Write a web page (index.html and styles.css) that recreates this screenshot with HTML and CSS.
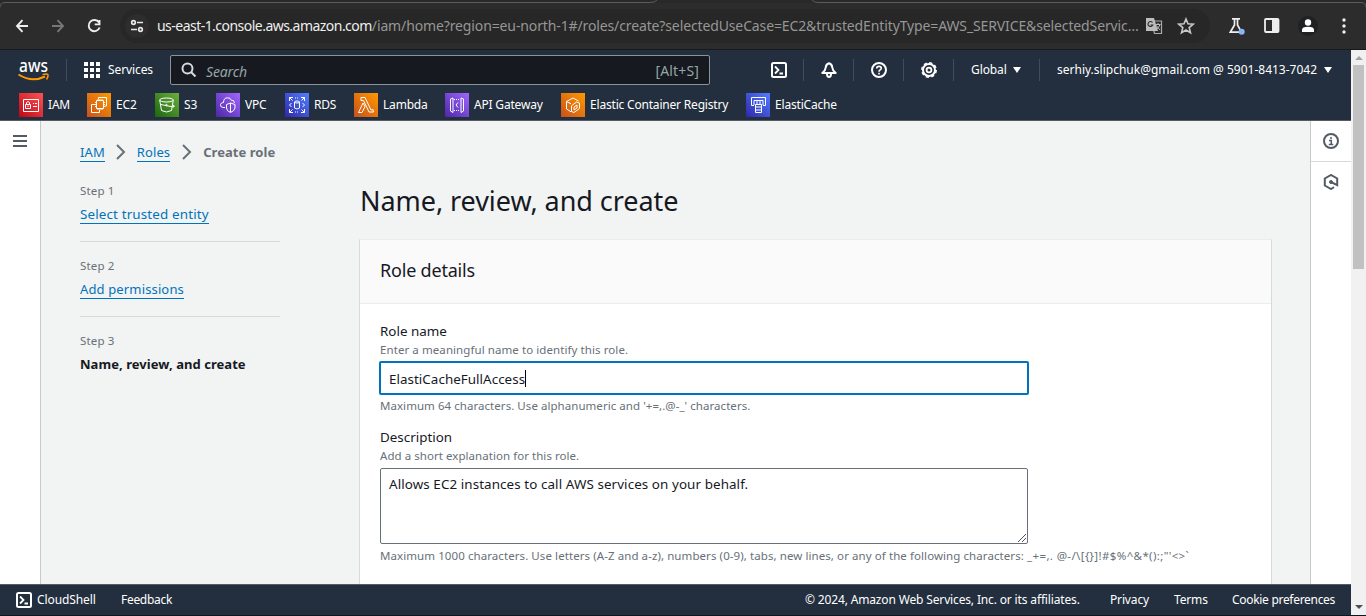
FILE: index.html
```html
<!DOCTYPE html>
<html lang="en">
<head>
<meta charset="utf-8">
<title>Create role | IAM</title>
<link rel="stylesheet" href="styles.css">
</head>
<body>
<div class="browser">
  <div class="toolbar">
    <svg class="toolbar-edge" width="1366" height="8" viewBox="0 0 1366 8"><rect width="1366" height="3" fill="#292929"/><path d="M0 7.500Q0 2.500 5 2.500H650Q655 2.500 657 0M812 0Q814 2.500 818 2.500H1361Q1366 2.500 1366 7.500" fill="none" stroke="#5c5c5c"/></svg>
    <svg class="nav-icons" width="90" height="20" viewBox="0 0 90 20" fill="none" stroke-width="1.900"><path d="M13 10H2M7.500 4.200L2 10L7.500 15.800" stroke="#eee"/><path d="M37 10H48M42.500 4.200L48 10L42.500 15.800" stroke="#777"/><path d="M84 6.500A5.600 5.600 0 1 0 84.600 11.500M84.500 4V8.400H79.700" stroke="#eee"/></svg>
    <div class="omnibox">
      <span class="site-info"><svg width="16" height="16" viewBox="0 0 16 16" fill="none" stroke="#e8e8e8" stroke-width="1.700"><circle cx="4.500" cy="4.500" r="1.800"/><path d="M8 4.500H14M2 11.500H8"/><circle cx="11.500" cy="11.500" r="1.800"/></svg></span>
      <span class="url"><b>us-east-1.console.aws.amazon.com</b>/iam/home?region=eu-north-1#/roles/create?selectedUseCase=EC2&amp;trustedEntityType=AWS_SERVICE&amp;selectedServic…</span>
      <svg class="translate" width="18" height="18" viewBox="0 0 18 18"><path d="M6 4H16.500V16.500H9.500L6 4Z" fill="#2a2a2a" stroke="#aaa" stroke-width="1.200"/><path d="M1 1H9L13 14H1Z" fill="#bdbdbd"/><path d="M7.500 5.500A2.500 2.500 0 1 0 7.800 8H5.500" fill="none" stroke="#333" stroke-width="1.200"/><path d="M10.500 7.500H15.500M13 6V7.500M15 7.500Q14 11 11 12.500M11.200 8.500L15 13" stroke="#bbb" fill="none"/></svg>
      <svg class="star" width="18" height="18" viewBox="0 0 18 18"><path d="M9 2L11 6.800L16.200 7.200L12.200 10.600L13.500 15.800L9 13L4.500 15.800L5.800 10.600L1.800 7.200L7 6.800Z" fill="none" stroke="#c7c7c7" stroke-width="1.600"/></svg>
    </div>
    <svg class="chrome-actions" width="126" height="24" viewBox="0 0 126 24"><path d="M4 4.800H12M6.500 5V11L2.300 18.200H13.500L9.500 11V5" fill="none" stroke="#eee" stroke-width="1.700"/><circle cx="13.700" cy="17.700" r="3" fill="#8ab4f8"/><rect x="37" y="5" width="13.500" height="13" rx="1" fill="none" stroke="#eee" stroke-width="1.800"/><path d="M44 5H51V18H44Z" fill="#eee"/><circle cx="80" cy="12" r="10" fill="#202122"/><circle cx="80" cy="8.500" r="3.200" fill="#fff"/><path d="M74 18V16Q74 12.800 80 12.800Q86 12.800 86 16V18Z" fill="#fff"/><g fill="#eee"><circle cx="116" cy="6" r="1.700"/><circle cx="116" cy="12" r="1.700"/><circle cx="116" cy="18" r="1.700"/></g></svg>
  </div>

  <div class="viewport">
    <div class="page">
      <header class="header">
        <div class="topbar">
          <svg class="aws" width="32" height="40" viewBox="0 -8 32 40"><text x="1" y="13" textLength="29" lengthAdjust="spacingAndGlyphs" class="aws-word">aws</text><path d="M.500 15.500Q14 24 27 17.500" fill="none" stroke="#f90" stroke-width="2"/><path d="M24.500 15.600Q29 14.300 30 15.600Q30.500 17.500 28.500 20.500" fill="none" stroke="#f90" stroke-width="1.500"/></svg>
          <i class="sep sep-logo"></i>
          <svg class="apps" width="16" height="16" viewBox="0 0 16 16" fill="#fff"><path d="M0 0H4V4H0ZM6 0H10V4H6ZM12 0H16V4H12ZM0 6H4V10H0ZM6 6H10V10H6ZM12 6H16V10H12ZM0 12H4V16H0ZM6 12H10V16H6ZM12 12H16V16H12Z"/></svg>
          <span class="services">Services</span>
          <div class="search"><svg width="16" height="16" viewBox="0 0 16 16" fill="none" stroke="#d5dbdb" stroke-width="2"><circle cx="6.500" cy="6.500" r="5"/><path d="M10 10L14.500 14.500"/></svg><em>Search</em><span class="hint">[Alt+S]</span></div>
          <div class="tools">
            <span><svg width="16" height="16" viewBox="0 0 16 16" fill="none" stroke="#fff" stroke-width="2"><rect x="1" y="1" width="14" height="14" rx="1.500"/><path d="M4 4.500L7.500 8L4 11.500M8.500 11.500H12" stroke-width="1.800"/></svg></span>
            <span><svg width="16" height="16" viewBox="0 0 16 16" fill="none" stroke="#fff" stroke-width="2" stroke-linejoin="round"><path d="M8 1.200Q5 2 4.700 5.500Q4.500 8.500 1.300 11H14.700Q11.500 8.500 11.300 5.500Q11 2 8 1.200Z"/><path d="M6 12Q6 15 8 15Q10 15 10 12"/></svg></span>
            <span><svg width="16" height="16" viewBox="0 0 16 16" fill="none" stroke="#fff" stroke-width="2"><circle cx="8" cy="8" r="7"/><path d="M5.700 6.500Q5.700 4.400 8 4.400Q10.300 4.400 10.300 6.300Q10.300 7.300 9 8Q8 8.500 8 9.700M8 10.800V12.500" stroke-width="1.600"/></svg></span>
            <span><svg width="16" height="16" viewBox="0 0 16 16" fill="none" stroke="#fff"><circle cx="8" cy="8" r="6" stroke-width="2"/><circle cx="8" cy="8" r="7.200" stroke-width="1.500" stroke-dasharray="3.200 2.455"/><circle cx="8" cy="8" r="2.400" stroke-width="1.800"/></svg></span>
          </div>
          <span class="region">Global</span><i class="caret"></i>
          <i class="sep sep-region"></i>
          <span class="account">serhiy.slipchuk@gmail.com @ 5901-8413-7042</span><i class="caret"></i>
        </div>
        <nav class="favorites">
          <a><svg class="g-red" viewBox="0 0 24 24"><path d="M4.500 6.500H19.500V18.500H4.500ZM6.500 11.500H11.500V15.500H6.500ZM7.500 11V9.500Q9 7.500 10.500 9.500V11M9 12.500V14M14 10.500H15M16 10.500H18M14 13.500H18"/></svg><span>IAM</span></a>
          <a><svg class="g-orange" viewBox="0 0 24 24"><path d="M9.500 7.500H16.500V15.500H9.500ZM11 6V7M13 6V7M15 6V7M11 16V17M13 16V17M15 16V17M8 9.500H9M8 11.500H9M8 13.500H9M17 9.500H18M17 11.500H18M17 13.500H18M11.500 6V4.500H19.500V13H18M8 11.500H4.500V19.500H12.500V17"/></svg><span>EC2</span></a>
          <a><svg class="g-green" viewBox="0 0 24 24"><ellipse cx="11.500" cy="7" rx="6.800" ry="2"/><path d="M4.700 7L6.500 17.500Q11.500 20.500 16.500 17.500L18.300 7M6 11.500Q12 13 19 14Q20 12.500 17.500 12"/><circle cx="11.500" cy="12" r=".7"/></svg><span>S3</span></a>
          <a><svg class="g-purple" viewBox="0 0 24 24"><path d="M9 14.500H7Q4 14 4.500 11.500Q5 9.500 7.500 9.500Q7.500 5 11.500 4.800Q14.500 4.500 15.500 7.500Q18 6.500 18.500 10M14.500 10L19 11.500V15Q18.500 18 14.500 19.500Q10.500 18 10.500 15V11.500ZM14.500 10V19"/></svg><span>VPC</span></a>
          <a><svg class="g-blue" viewBox="0 0 24 24"><path d="M4.500 8V4.500H8M4.500 4.500L7.500 7.500M16 4.500H19.500V8M19.500 4.500L16.500 7.500M4.500 16V19.500H8M4.500 19.500L7.500 16.500M19.500 16V19.500H16M19.500 19.500L16.500 16.500M6.500 10L4.500 12L6.500 14M17.500 10L19.500 12L17.500 14M9.500 9V15Q12 17 14.500 15V9"/><ellipse cx="12" cy="9" rx="2.500" ry="1"/><path d="M10 5H14M10 19H14" stroke-dasharray="1 1"/></svg><span>RDS</span></a>
          <a><svg class="g-orange" viewBox="0 0 24 24"><path d="M7 4.500H11L17 17L19 16.500L19.500 19H15L9.500 7.500H7ZM9 10L11 13.500L8 19.500H4.500Z"/></svg><span>Lambda</span></a>
          <a><svg class="g-purple" viewBox="0 0 24 24"><path d="M8 5L5.500 6V18L8 19.500ZM16 5L18.500 6V18L16 19.500ZM13 9.500L11 12L13 14.500"/><path d="M9 6.500H15M9 17.500H15" stroke-dasharray="1 1"/></svg><span>API Gateway</span></a>
          <a><svg class="g-orange" viewBox="0 0 24 24"><path d="M10 18.800L5.500 16V8.500L12 5L17.500 8M5.500 8.500L10 10.800M10.500 12.800L15.500 9L18.500 10V15.500L13 19.500L10.500 18.500ZM13 17V14L16 12V15Z"/></svg><span>Elastic Container Registry</span></a>
          <a><svg class="g-blue" viewBox="0 0 24 24"><path d="M8 12.500H5.500V4.500H19.500V12.500H17M8 12V7.500H17V12M11 7.500V11M14 7.500V11M9.500 11.500H15.500V19.500H9.500ZM9.500 14H15.500M9.500 17H15.500"/></svg><span>ElastiCache</span></a>
        </nav>
      </header>

      <div class="body">
        <aside class="left-rail"><svg width="14" height="12" viewBox="0 0 14 12" fill="#545b64"><path d="M0 0H14V2H0ZM0 5H14V7H0ZM0 10H14V12H0Z"/></svg></aside>
        <main class="main">
          <div class="side">
            <div class="crumbs"><a class="link">IAM</a><svg width="10" height="16" viewBox="0 0 10 16"><path d="M1 1L8 8L1 15"/></svg><a class="link">Roles</a><svg width="10" height="16" viewBox="0 0 10 16"><path d="M1 1L8 8L1 15"/></svg><b>Create role</b></div>
            <ol class="steps">
              <li><small>Step 1</small><a class="link link-trust">Select trusted entity</a></li>
              <li><small>Step 2</small><a class="link link-perms">Add permissions</a></li>
              <li><small>Step 3</small><b>Name, review, and create</b></li>
            </ol>
          </div>
          <div class="content">
            <h1>Name, review, and create</h1>
            <section class="card">
              <div class="card-head"><h2>Role details</h2></div>
              <div class="card-body">
                <div class="label label-name">Role name</div>
                <div class="note note-name">Enter a meaningful name to identify this role.</div>
                <div class="input"><span>ElastiCacheFullAccess</span></div>
                <div class="note note-limit">Maximum 64 characters. Use alphanumeric and '+=,.@-_' characters.</div>
                <div class="label label-desc">Description</div>
                <div class="note note-desc">Add a short explanation for this role.</div>
                <div class="textarea"><span>Allows EC2 instances to call AWS services on your behalf.</span><svg width="8" height="8" viewBox="0 0 8 8" stroke="#555"><path d="M0 8L8 0M4 8L8 4"/></svg></div>
                <div class="note note-chars">Maximum 1000 characters. Use letters (A-Z and a-z), numbers (0-9), tabs, new lines, or any of the following characters: <span class="symbols">_+=,. @-/\[{}]!#$%^&amp;*():;"'&lt;&gt;`</span></div>
              </div>
            </section>
          </div>
        </main>
        <aside class="right-rail">
          <span><svg width="16" height="16" viewBox="0 0 16 16" fill="none" stroke="#545b64" stroke-width="2"><circle cx="8" cy="8" r="7"/><path d="M8 4V6M6 7.500H8.300V11M5.800 11.500H10.300" stroke-width="1.500"/></svg></span>
          <span><svg width="16" height="16" viewBox="0 0 16 16" fill="none" stroke="#545b64" stroke-width="2"><path d="M11 13.200L8 15L1.800 11.500V4.500L8 1L14.200 4.500V11.200L8 8"/><circle cx="8" cy="8" r="1.500" fill="#545b64" stroke-width="1"/></svg></span>
        </aside>
      </div>

      <footer class="footer">
        <svg width="16" height="16" viewBox="0 0 16 16" fill="none" stroke="#fff" stroke-width="2"><rect x="1" y="1" width="14" height="14" rx="1.500"/><path d="M4 4.500L7.500 8L4 11.500M8.500 11.500H12" stroke-width="1.800"/></svg>
        <span class="f-shell">CloudShell</span><span class="f-feedback">Feedback</span>
        <span class="f-copy">© 2024, Amazon Web Services, Inc. or its affiliates.</span><span class="f-privacy">Privacy</span><span class="f-terms">Terms</span><span class="f-cookie">Cookie preferences</span>
      </footer>
    </div>
    <div class="scrollbar"><i class="up"></i><i class="thumb"></i><i class="down"></i></div>
  </div>
</div>
</body>
</html>
```
FILE: styles.css
```css
* { box-sizing: border-box; }
body { margin: 0; font: 13px/20px "Noto Sans", sans-serif; color: #16191f; }
svg { display: block; flex: none; }
i { display: block; flex: none; }
span, a, b, em { white-space: nowrap; }
.browser { width: 1366px; height: 616px; overflow: hidden; display: flex; flex-direction: column; background: #10161e; }

.toolbar { position: relative; height: 50px; flex: none; background: #2c2c2c; border-bottom: 1px solid #17191c; display: flex; align-items: center; padding: 3px 0 0 15px; }
.toolbar-edge { position: absolute; left: 0; top: 0; }
.nav-icons { margin-right: 15px; }
.omnibox { width: 1090px; height: 34px; border-radius: 17px; background: #272727; display: flex; align-items: center; padding-left: 5px; }
.site-info { width: 24px; height: 24px; border-radius: 12px; background: #2d2d2d; display: grid; place-items: center; margin-right: 8px; }
.url { width: 984px; color: #969696; font-size: 14px; letter-spacing: -.125px; }
.url b { font-weight: 400; color: #eee; letter-spacing: -.53px; }
.translate { margin-left: 4px; }
.star { margin-left: 14px; }
.chrome-actions { margin-left: 18px; }

.viewport { height: 565px; display: flex; }
.page { width: 1351px; display: flex; flex-direction: column; }
.header { height: 71px; flex: none; background: #232f3e; border-bottom: 1px solid #545b64; color: #fff; font-size: 12px; }
.topbar { height: 40px; display: flex; align-items: center; padding-left: 18px; }
.aws { margin-top: 2px; overflow: visible; }
.aws-word { font: 500 18px "Noto Sans", sans-serif; fill: #fff; }
.sep { width: 1px; height: 22px; background: #414d5c; }
.sep-logo { margin: 0 17px 0 16px; }
.services { width: 62px; margin-left: 8px; letter-spacing: -.1px; }
.search { width: 540px; height: 30px; border: 1px solid #879596; border-radius: 2px; background: #161920; display: flex; align-items: center; padding: 1px 10px; color: #95a5a6; font-size: 14px; }
.search em { margin-left: 9px; padding-top: 3px; letter-spacing: -.15px; }
.hint { margin-left: auto; padding-top: 2px; letter-spacing: .15px; }
.tools { display: grid; grid-template-columns: repeat(4, 50px); margin-left: 44px; }
.tools span { height: 22px; display: grid; place-items: center; border-right: 1px solid #414d5c; }
.region { margin-left: 17px; width: 42px; letter-spacing: -.1px; }
.caret { border: 4px solid transparent; border-top: 6px solid #fff; border-bottom: 0; }
.sep-region { margin: 0 17px 0 18px; }
.account { width: 267px; }
.favorites { height: 30px; display: grid; grid-template-columns: 68px 68px 61px 69px 69px 91px 116px 185px 100px; padding: 3px 0 0 19px; letter-spacing: -.19px; }
.favorites a { display: flex; align-items: center; height: 24px; gap: 5px; }
.favorites svg { width: 24px; height: 24px; fill: none; stroke: #fff; stroke-width: 1; }
.g-red { background: linear-gradient(45deg, #bd0816, #ff5252); }
.g-orange { background: linear-gradient(45deg, #c8511b, #f90); }
.g-green { background: linear-gradient(45deg, #1b660f, #6cae3e); }
.g-purple { background: linear-gradient(45deg, #4d27a8, #a166ff); }
.g-blue { background: linear-gradient(45deg, #2e27ad, #527fff); }

.body { height: 463px; flex: none; display: flex; overflow: hidden; background: #f2f3f3; }
.left-rail { width: 41px; background: #fff; border-right: 1px solid #c6caca; padding: 14px 0 0 13px; }
.main { width: 1269px; display: flex; padding-left: 39px; }
.right-rail { width: 41px; background: #fff; border-left: 1px solid #c6caca; }
.right-rail span { height: 40px; display: grid; place-items: center; }
.right-rail span:first-child { height: 41px; border-bottom: 1px solid #d5dbdb; }
.side { width: 279px; padding-top: 21px; color: #687078; }
.crumbs { display: flex; align-items: center; height: 20px; letter-spacing: .1px; }
.crumbs svg { margin: 0 11px; fill: none; stroke: #687078; stroke-width: 2; }
.crumbs .link + svg + .link + svg { margin-left: 12px; }
.crumbs b { letter-spacing: .05px; }
.link { color: #0073bb; line-height: 18px; border-bottom: 1px solid #0073bb; }
.link-trust { font-size: 13.400px; letter-spacing: .15px; }
.link-perms { letter-spacing: .14px; }
.steps { list-style: none; margin: 19px 0 0; padding: 0; width: 200px; }
.steps li { height: 61px; margin-bottom: 14px; border-bottom: 1px solid #d5dbdb; display: flex; flex-direction: column; align-items: flex-start; }
.steps li:last-child { border: 0; }
.steps small { font-size: 11.500px; line-height: 20px; margin-bottom: 4px; letter-spacing: .15px; }
.steps b { color: #16191f; line-height: 18px; letter-spacing: .05px; }
.content { width: 913px; }
h1 { margin: 62px 0 0 1px; font-size: 27px; font-weight: 400; line-height: 36px; white-space: nowrap; letter-spacing: -.06px; }
.card { margin-top: 20px; border: 1px solid #d5dbdb; border-top-color: #eaeded; background: #fff; height: 500px; }
.card-head { height: 64px; background: #fafafa; border-bottom: 1px solid #eaeded; padding: 16px 20px; }
h2 { margin: 0; font-size: 18px; line-height: 28px; font-weight: 400; letter-spacing: -.2px; }
.card-body { padding: 17px 19px; }
.label { font-size: 13.400px; line-height: 20px; margin-left: 1px; }
.note { color: #687078; font-size: 11.500px; line-height: 16px; margin-left: 1px; white-space: nowrap; letter-spacing: .05px; }
.note-name { padding-top: 1px; height: 16px; letter-spacing: .08px; }
.note-chars { letter-spacing: .08px; }
.symbols { letter-spacing: .37px; }
.input { width: 650px; height: 34px; margin: 4px 0 3px; border: 2px solid #0073bb; border-radius: 2px; padding: 7px 8px; }
.input span { display: inline-block; height: 17px; line-height: 18px; border-right: 1px solid #000; vertical-align: top; font-size: 13.400px; letter-spacing: .04px; }
.label-desc { margin-top: 13px; }
.note-desc { margin-top: 1px; }
.textarea { width: 648px; height: 76px; margin: 4px 0 4px 1px; border: 1px solid #687078; border-radius: 2px; padding: 5px 1px 1px 8px; display: flex; justify-content: space-between; font-size: 13.400px; letter-spacing: .09px; }
.textarea svg { align-self: flex-end; }

.footer { height: 31px; flex: none; background: #232f3e; border-top: 1px solid #545b64; color: #fff; font-size: 12px; display: flex; align-items: center; padding-left: 16px; }
.f-shell { margin-left: 5px; width: 84px; letter-spacing: -.1px; }
.f-feedback { width: 684px; letter-spacing: -.3px; }
.f-copy { width: 305px; letter-spacing: -.15px; }
.f-privacy { width: 64px; letter-spacing: -.15px; }
.f-terms { width: 58px; letter-spacing: -.15px; }
.f-cookie { letter-spacing: -.3px; }
.scrollbar { width: 15px; background: #f1f1f1; display: flex; flex-direction: column; align-items: center; }
.up { margin-top: 6px; border: 4px solid transparent; border-bottom: 4px solid #a3a3a3; border-top: 0; }
.thumb { width: 11px; height: 204px; background: #c1c1c1; margin-top: 5px; }
.down { margin: auto 0 6px; border: 4px solid transparent; border-top: 4px solid #505050; border-bottom: 0; }
```
